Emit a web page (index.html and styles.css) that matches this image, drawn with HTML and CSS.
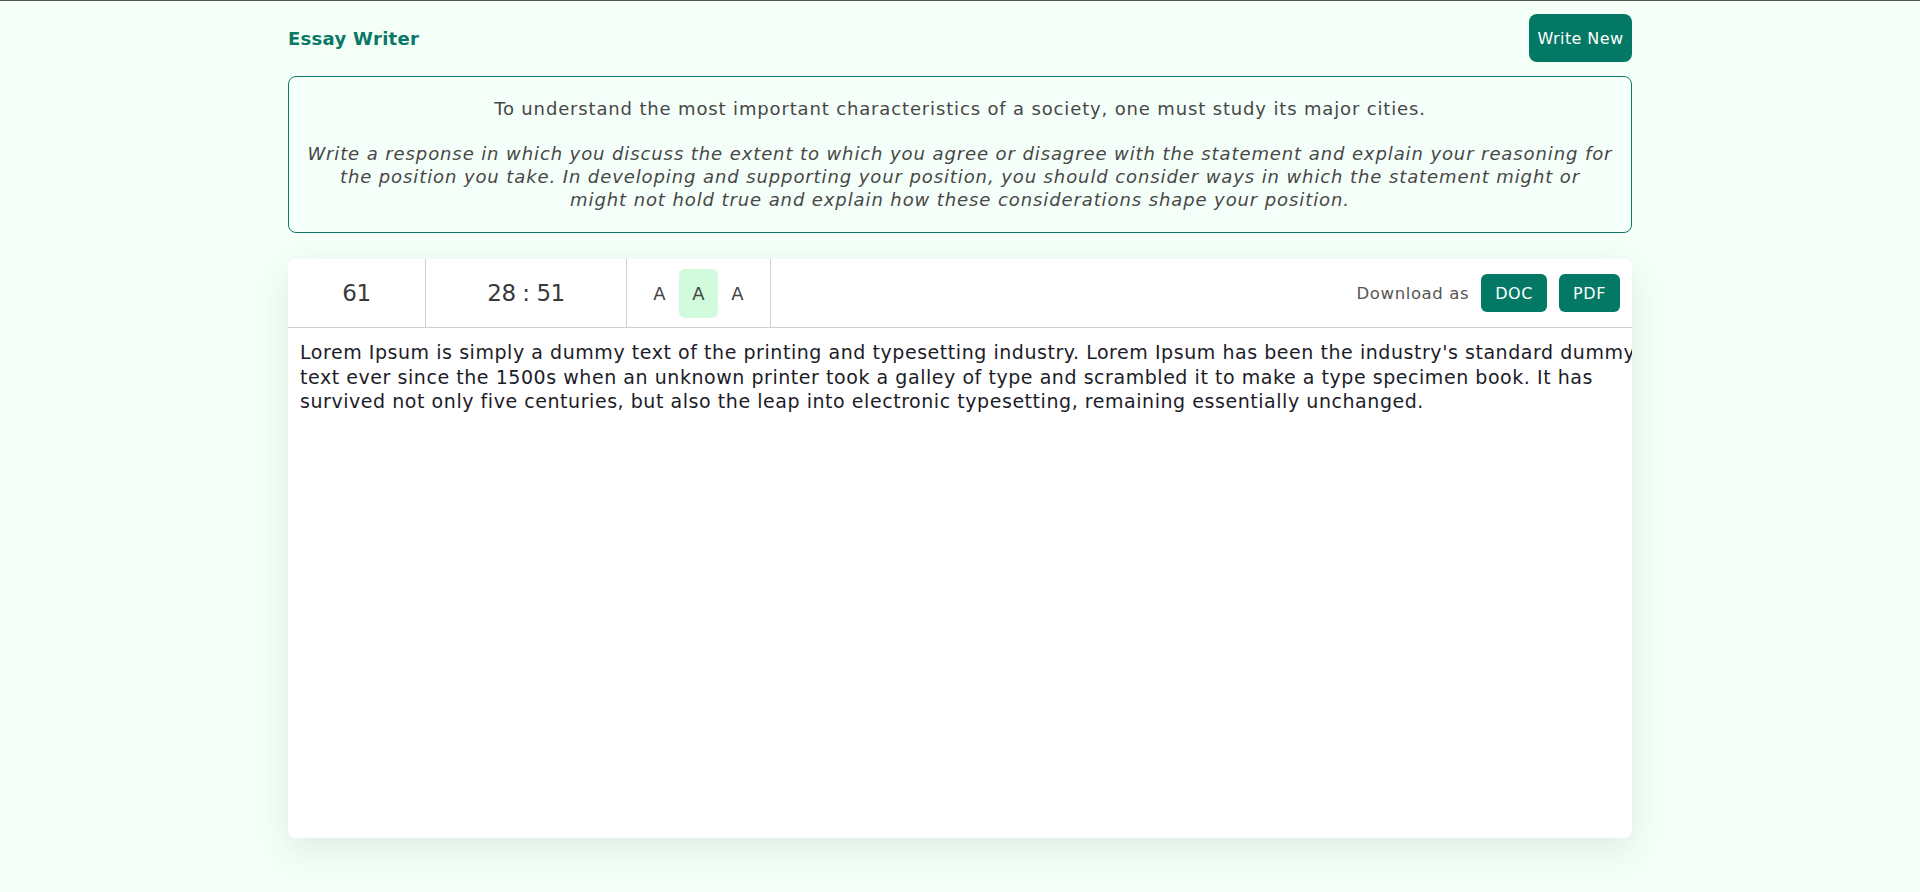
FILE: index.html
```html
<!DOCTYPE html>
<html lang="en">
<head>
<meta charset="utf-8">
<title>Essay Writer</title>
<link rel="stylesheet" href="styles.css">
</head>
<body>
<div class="page">
  <header class="header">
    <h1 class="brand">Essay Writer</h1>
    <button class="btn btn-new">Write New</button>
  </header>

  <section class="prompt">
    <p class="prompt-title">To understand the most important characteristics of a society, one must study its major cities.</p>
    <p class="prompt-task">Write a response in which you discuss the extent to which you agree or disagree with the statement and explain your reasoning for the position you take. In developing and supporting your position, you should consider ways in which the statement might or<br>might not hold true and explain how these considerations shape your position.</p>
  </section>

  <section class="editor">
    <div class="toolbar">
      <div class="cell cell-count">61</div>
      <div class="cell cell-timer">28 : 51</div>
      <div class="cell cell-size">
        <button class="size-btn">A</button>
        <button class="size-btn active">A</button>
        <button class="size-btn">A</button>
      </div>
      <div class="cell cell-download">
        <span class="download-label">Download as</span>
        <button class="btn btn-sm">DOC</button>
        <button class="btn btn-sm">PDF</button>
      </div>
    </div>
    <div class="essay">
      <div class="essay-line">Lorem Ipsum is simply a dummy text of the printing and typesetting industry. Lorem Ipsum has been the industry's standard dummy</div>
      <div class="essay-line">text ever since the 1500s when an unknown printer took a galley of type and scrambled it to make a type specimen book. It has</div>
      <div class="essay-line">survived not only five centuries, but also the leap into electronic typesetting, remaining essentially unchanged.</div>
    </div>
  </section>
</div>
</body>
</html>
```

FILE: styles.css
```css
* { box-sizing: border-box; }

html, body {
  margin: 0;
  padding: 0;
}

body {
  background: #f4fff7;
  border-top: 1px solid #555;
  font-family: "DejaVu Sans", "Noto Sans", sans-serif;
  color: #333;
  min-height: 892px;
}

.page {
  width: 1344px;
  margin: 0 auto;
  padding-top: 12px;
}

.header {
  display: flex;
  justify-content: space-between;
  align-items: center;
  height: 50px;
}

.brand {
  margin: 0;
  font-size: 18px;
  font-weight: bold;
  letter-spacing: 0.3px;
  color: #0a7866;
}

.btn {
  font-family: inherit;
  border: none;
  background: #037865;
  color: #fff;
  cursor: pointer;
}

.btn-new {
  width: 103px;
  height: 48px;
  padding: 0;
  border-radius: 8px;
  font-size: 16px;
  letter-spacing: 0.4px;
}

.prompt {
  margin-top: 13px;
  border: 1px solid #0f7a6a;
  border-radius: 8px;
  background: #f5fff9;
  padding: 20px 12px 21px;
  text-align: center;
  font-size: 18px;
  letter-spacing: 0.85px;
  line-height: 23px;
  color: #474747;
}

.prompt-title {
  margin: 0;
}

.prompt-task {
  margin: 22px 0 0;
  font-style: italic;
  letter-spacing: 0.9px;
}

.editor {
  margin-top: 26px;
  background: #fff;
  border-radius: 8px;
  height: 579px;
  overflow: hidden;
  box-shadow: 0 12px 32px rgba(40, 80, 60, 0.10);
}

.toolbar {
  display: flex;
  height: 69px;
  border-bottom: 1px solid #cfcfcf;
}

.cell {
  display: flex;
  align-items: center;
  justify-content: center;
  border-right: 1px solid #cfcfcf;
  color: #3a3a3a;
}

.cell-count {
  width: 138px;
  font-size: 23px;
  letter-spacing: -0.5px;
}

.cell-timer {
  width: 201px;
  font-size: 23px;
  letter-spacing: -0.5px;
}

.cell-size {
  width: 144px;
}

.size-btn {
  width: 39px;
  height: 49px;
  border: none;
  border-radius: 6px;
  background: transparent;
  font-family: inherit;
  font-size: 18px;
  color: #444;
  padding: 0;
}

.size-btn.active {
  background: #d2fbdd;
}

.cell-download {
  flex: 1;
  border-right: none;
  justify-content: flex-end;
  gap: 12px;
  padding-right: 12px;
}

.download-label {
  font-size: 16.5px;
  letter-spacing: 0.6px;
  color: #555;
}

.btn-sm {
  height: 38px;
  padding: 0 14px;
  border-radius: 6px;
  font-size: 16px;
  letter-spacing: 0.6px;
}

.essay {
  padding: 12px 0 0 12px;
  font-size: 19px;
  letter-spacing: 0.55px;
  line-height: 24.5px;
  color: #1c1c28;
}

.essay-line {
  white-space: nowrap;
}
```
